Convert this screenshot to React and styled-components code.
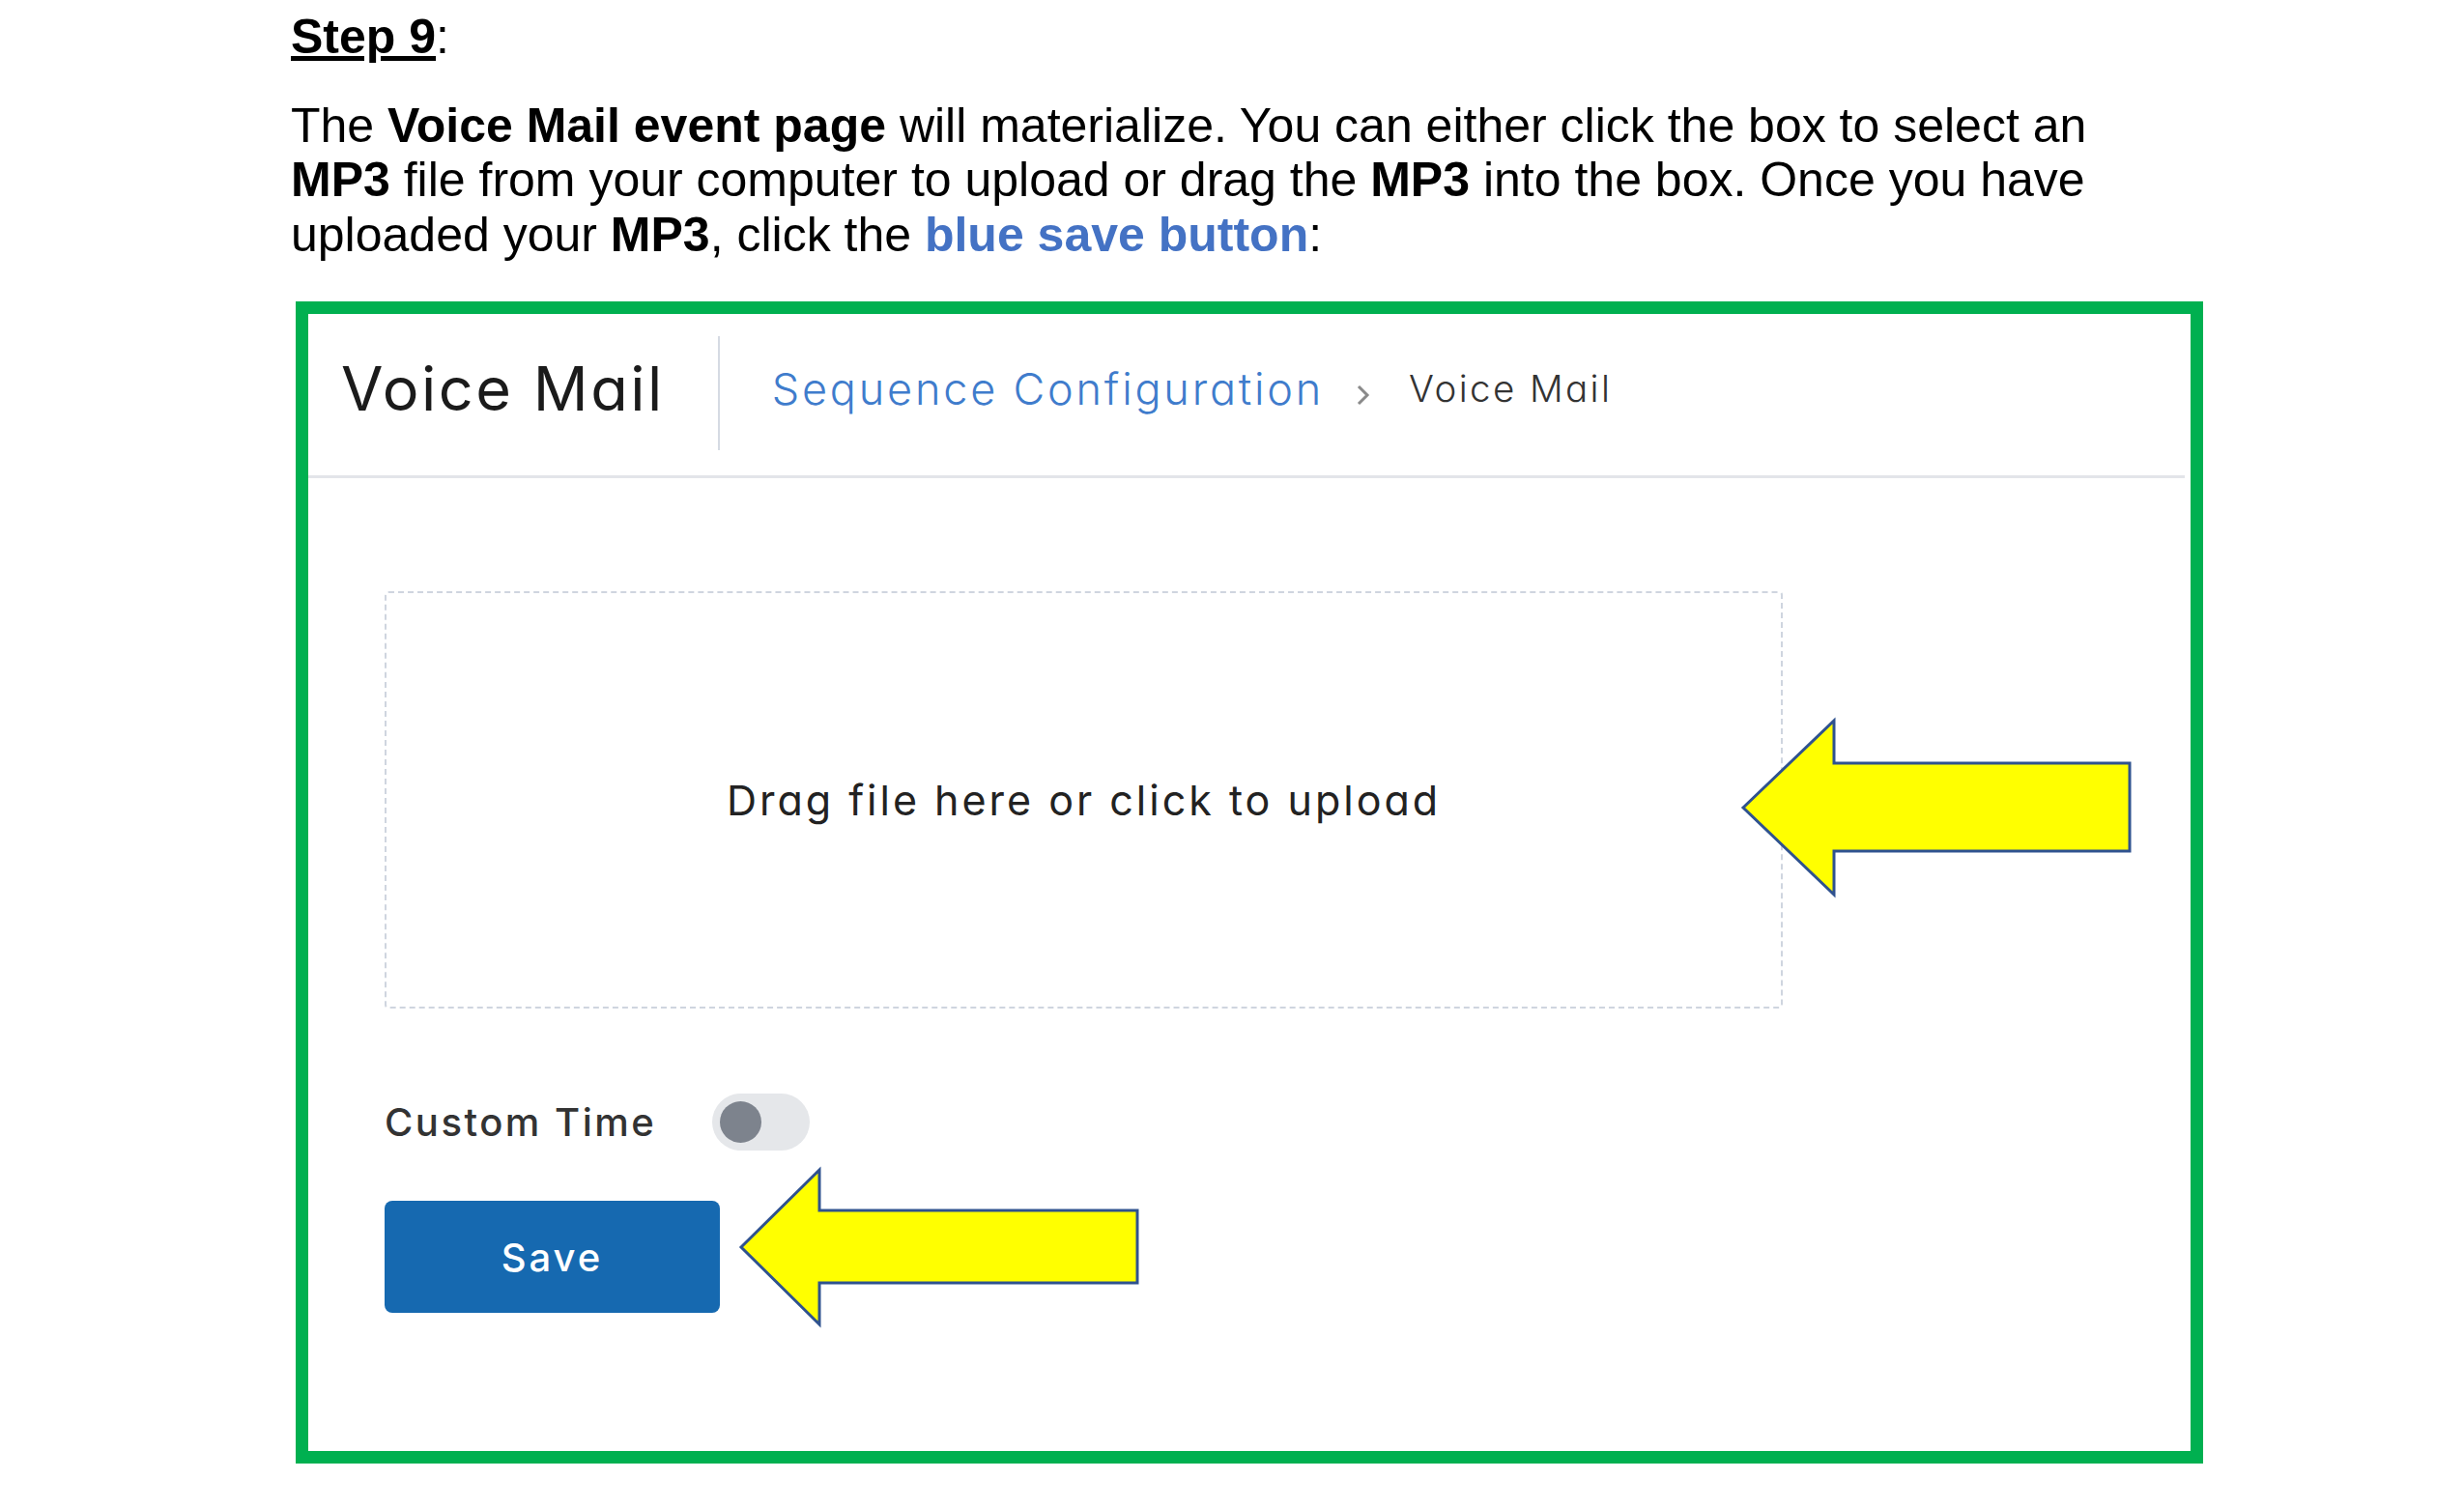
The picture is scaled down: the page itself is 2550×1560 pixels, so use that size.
import React from "react";
import styled, { createGlobalStyle } from "styled-components";

const GlobalStyle = createGlobalStyle`
  html, body {
    margin: 0;
    padding: 0;
    background: #ffffff;
  }
  body {
    font-family: "Liberation Sans", Arial, sans-serif;
  }
`;

const Page = styled.div`
  width: 2550px;
  height: 1560px;
  box-sizing: border-box;
  padding: 10px 0 0 301px;
`;

const StepHeading = styled.h2`
  margin: 0;
  font-size: 50px;
  line-height: 56.5px;
  font-weight: 400;
  color: #000;
`;

const StepLabel = styled.span`
  font-weight: 700;
  text-decoration: underline;
`;

const Intro = styled.p`
  margin: 35px 0 0;
  font-size: 50px;
  line-height: 56.5px;
  color: #000;
  white-space: nowrap;
`;

const Strong = styled.b`
  font-weight: 700;
  color: ${(p) => (p.$blue ? "#4472c4" : "inherit")};
`;

const Frame = styled.div`
  position: relative;
  margin: 41px 0 0 5px;
  width: 1974px;
  height: 1203px;
  box-sizing: border-box;
  border: 13px solid #00b050;
  background: #fff;
  font-family: "Inter", "Open Sans", sans-serif;
  font-feature-settings: "cv11" 1;
`;

const Header = styled.div`
  display: flex;
  align-items: center;
  height: 170px;
  box-sizing: border-box;
  margin-right: 6px;
  padding: 0 0 13px 34px;
  border-bottom: 3px solid #e3e5e9;
`;

const PageTitle = styled.h1`
  margin: 0;
  font-size: 63px;
  font-weight: 400;
  color: #1b1b1b;
  letter-spacing: 2.5px;
`;

const Divider = styled.div`
  width: 2px;
  height: 118px;
  margin: 10px 54px 0 55px;
  background: #d5dae3;
`;

const Crumbs = styled.nav`
  display: flex;
  align-items: center;
`;

const Crumb = styled.span`
  font-size: ${(p) => (p.$current ? "38.5px" : "45px")};
  font-weight: 300;
  letter-spacing: ${(p) => (p.$current ? "2.4px" : "2.8px")};
  color: ${(p) => (p.$current ? "#333" : "#3f7ccc")};
`;

const Chevron = styled.svg`
  width: 15px;
  height: 24px;
  margin: 14px 40px 0 33px;
`;

const Body = styled.div`
  display: flex;
  flex-direction: column;
  align-items: flex-start;
  padding: 117px 0 0 79px;
`;

const DropZone = styled.div`
  display: flex;
  align-items: center;
  justify-content: center;
  width: 1447px;
  height: 432px;
  box-sizing: border-box;
  border: 2px dashed #cfd5df;
  border-radius: 4px;
  font-size: 43px;
  font-weight: 400;
  letter-spacing: 3px;
  color: #222;
  cursor: pointer;
`;

const OptionRow = styled.div`
  display: flex;
  align-items: center;
  margin-top: 88px;
  height: 59px;
`;

const OptionLabel = styled.span`
  width: 339px;
  font-size: 40px;
  font-weight: 500;
  letter-spacing: 2.5px;
  color: #333;
`;

const Toggle = styled.div`
  display: flex;
  align-items: center;
  width: 101px;
  height: 59px;
  box-sizing: border-box;
  padding-left: 8px;
  border-radius: 30px;
  background: #e5e7ea;
`;

const Knob = styled.div`
  width: 43px;
  height: 43px;
  border-radius: 50%;
  background: #7d838d;
`;

const SaveButton = styled.button`
  margin-top: 52px;
  width: 347px;
  height: 116px;
  border: none;
  border-radius: 8px;
  background: #1669b0;
  color: #fff;
  font-family: inherit;
  font-size: 40px;
  font-weight: 500;
  letter-spacing: 3px;
  cursor: pointer;
`;

const Callout = styled.svg`
  position: absolute;
  left: ${(p) => p.$x}px;
  top: ${(p) => p.$y}px;
  overflow: visible;
`;

const Arrow = ({ x, y, w, h, head, shaftTop, shaftBottom }) => (
  <Callout $x={x} $y={y} width={w} height={h} viewBox={`0 0 ${w} ${h}`}>
    <polygon
      points={`5,${h / 2} ${head},5 ${head},${shaftTop} ${w - 5},${shaftTop} ${w - 5},${shaftBottom} ${head},${shaftBottom} ${head},${h - 5}`}
      fill="#ffff00"
      stroke="#2f528f"
      strokeWidth="3"
    />
  </Callout>
);

const App = () => (
  <Page>
    <GlobalStyle />
    <StepHeading>
      <StepLabel>Step 9</StepLabel>:
    </StepHeading>
    <Intro>
      The <Strong>Voice Mail event page</Strong> will materialize. You can either click the box to select an
      <br />
      <Strong>MP3</Strong> file from your computer to upload or drag the <Strong>MP3</Strong> into the box. Once you have
      <br />
      uploaded your <Strong>MP3</Strong>, click the <Strong $blue>blue save button</Strong>:
    </Intro>

    <Frame>
      <Header>
        <PageTitle>Voice Mail</PageTitle>
        <Divider />
        <Crumbs>
          <Crumb>Sequence Configuration</Crumb>
          <Chevron viewBox="0 0 15 24">
            <path d="M3 3 L12 12 L3 21" fill="none" stroke="#8a8a8a" strokeWidth="3" />
          </Chevron>
          <Crumb $current>Voice Mail</Crumb>
        </Crumbs>
      </Header>

      <Body>
        <DropZone>Drag file here or click to upload</DropZone>
        <OptionRow>
          <OptionLabel>Custom Time</OptionLabel>
          <Toggle>
            <Knob />
          </Toggle>
        </OptionRow>
        <SaveButton>Save</SaveButton>
      </Body>

      <Arrow x={1480} y={416} w={410} h={190} head={99} shaftTop={49} shaftBottom={140} />
      <Arrow x={443} y={881} w={420} h={170} head={86} shaftTop={47} shaftBottom={122} />
    </Frame>
  </Page>
);

export default App;
